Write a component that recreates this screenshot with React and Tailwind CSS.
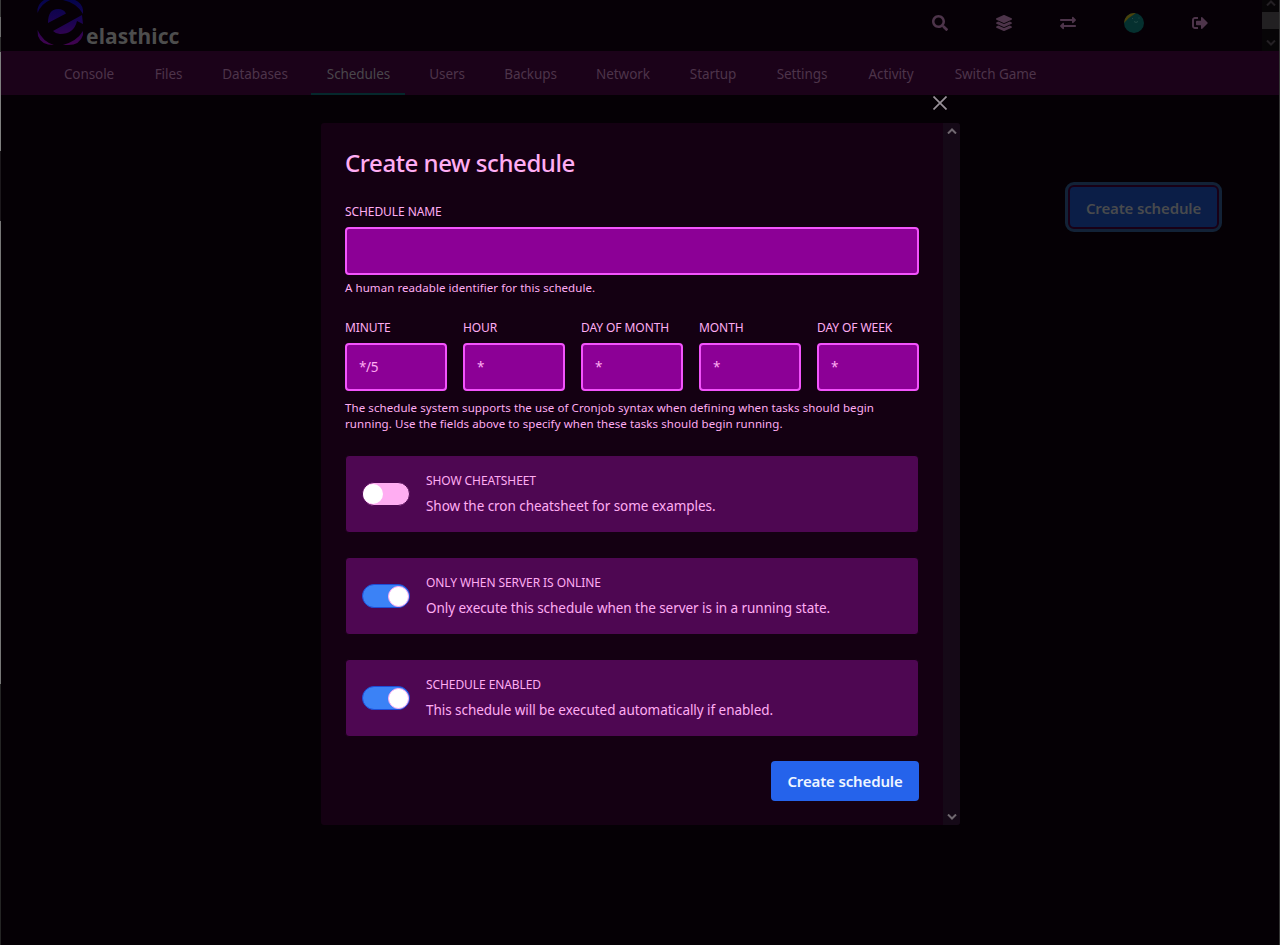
import { FaSearch, FaLayerGroup, FaExchangeAlt, FaSignOutAlt } from 'react-icons/fa';

const links = [
  ['Console', 'w-[83px]'],
  ['Files', 'w-[60px]'],
  ['Databases', 'w-[97px]'],
  ['Schedules', 'w-[94px]'],
  ['Users', 'w-[67px]'],
  ['Backups', 'w-[84px]'],
  ['Network', 'w-[85px]'],
  ['Startup', 'w-[79px]'],
  ['Settings', 'w-[83px]'],
  ['Activity', 'w-[79px]'],
  ['Switch Game', 'w-[114px]'],
];

const fields = [
  ['Minute', '*/5'],
  ['Hour', '*'],
  ['Day of month', '*'],
  ['Month', '*'],
  ['Day of week', '*'],
];

const toggles = [
  ['Show Cheatsheet', 'Show the cron cheatsheet for some examples.', false],
  ['Only When Server Is Online', 'Only execute this schedule when the server is in a running state.', true],
  ['Schedule Enabled', 'This schedule will be executed automatically if enabled.', true],
];

function Logo() {
  return (
    <svg className="block h-[46px] w-[48px]" viewBox="0 0 48 46">
      <defs>
        <linearGradient id="logo" x1="0" y1="0" x2="0" y2="46" gradientUnits="userSpaceOnUse">
          <stop offset="0" stopColor="#04044c" />
          <stop offset="0.5" stopColor="#1c0350" />
          <stop offset="1" stopColor="#440350" />
        </linearGradient>
      </defs>
      <path
        fill="url(#logo)"
        d="M1.500 13V9Q3 3 8 0H14Q5 4 1.500 13ZM27 0H39Q46 3 47 10V14Q41 3 27 0ZM12 23Q12 9 22 9Q28 9 30 13.500L12 23ZM17 31L46 15L47 24L41 21Q38 34 24 34Q20 34 17 31ZM1.500 30Q7 42 18 45Q5 45 2 36ZM47 31V35Q44 45 32 45H27Q41 41 47 31Z"
      />
    </svg>
  );
}

function Chevron({ down, className }) {
  return (
    <svg viewBox="0 0 10 6" className={className} fill="none" stroke="currentColor" strokeWidth="2">
      <path d={down ? 'M1 0.5L5 4.5L9 0.5' : 'M1 5.5L5 1.5L9 5.5'} />
    </svg>
  );
}

function Label({ children }) {
  return <div className="pt-px whitespace-nowrap text-[12px] leading-4 tracking-[-0.08px] text-[#ffadf2] uppercase">{children}</div>;
}

function Toggle({ on }) {
  return on ? (
    <span className="flex h-6 w-12 shrink-0 items-center justify-end rounded-full border border-[#1d4ed8] bg-[#3b82f6]">
      <span className="size-[21px] rounded-full border border-[#ffadf2] bg-white" />
    </span>
  ) : (
    <span className="flex h-6 w-12 shrink-0 items-center rounded-full border border-[#4d0752] bg-[#ffadf2]">
      <span className="size-5 rounded-full bg-white" />
    </span>
  );
}

export default function App() {
  return (
    <div className="flex h-[945px] w-[1280px] overflow-hidden bg-[#050005]">
      <div className="flex w-px shrink-0 flex-col">
        <span className="h-[17px] bg-[#3c3c3c]" />
        <span className="h-[20px] bg-[#6c6c6c]" />
        <span className="h-[15px] bg-[#303030]" />
        <span className="h-[99px] bg-[#7f7f7f]" />
        <span className="h-[70px] bg-[#1c181c]" />
        <span className="h-[463px] bg-[#777777]" />
        <span className="flex-1 bg-[#242424]" />
      </div>

      <div className="flex w-[1278px] shrink-0 flex-col font-['Noto_Sans',sans-serif]">
        <header className="flex h-[51px] shrink-0 justify-between bg-[#060006]">
          <div className="flex pl-[35px]">
            <Logo />
            <span className="ml-0.5 pt-[21px] text-[21px] leading-[30px] font-bold tracking-[0.1px] text-[#4d4d4d]">elasthicc</span>
          </div>
          <div className="flex">
            <div className="flex h-[46px] items-center text-[#4d344a]">
              <span className="flex w-16 justify-center"><FaSearch size={16} /></span>
              <span className="flex w-16 justify-center"><FaLayerGroup size={16} /></span>
              <span className="flex w-16 justify-center"><FaExchangeAlt size={16} /></span>
              <span className="flex w-[68px] justify-center">
                <svg className="size-5" viewBox="0 0 20 20">
                  <clipPath id="face"><circle cx="10" cy="10" r="10" /></clipPath>
                  <g clipPath="url(#face)">
                    <path fill="#05302f" d="M0 0H20V20H0Z" />
                    <path fill="#4b420b" d="M0 0H12Q5 4 0 10Z" />
                  </g>
                  <path d="M10 8.500Q12 10.500 14 8.500M8 5.500H9M14.500 5H15.500" fill="none" stroke="#28504c" strokeWidth="0.8" />
                </svg>
              </span>
              <span className="flex w-16 justify-center"><FaSignOutAlt size={16} /></span>
            </div>
            <div className="ml-[30px] flex w-[17px] flex-col items-center bg-[#070507] text-[#242024]">
              <Chevron className="h-[6px] w-[10px] shrink-0" />
              <span className="mt-[6px] h-[17px] w-full bg-[#222022]" />
              <Chevron down className="mt-[11px] h-[6px] w-[10px]" />
            </div>
          </div>
        </header>

        <nav className="flex h-11 shrink-0 gap-2 bg-[#1b0219] pl-[46px] text-[13.5px] tracking-[-0.08px] text-[#4d344a]">
          {links.map(([name, width]) => (
            <a
              key={name}
              className={`${width} flex h-11 items-center justify-center border-b-2 pt-1 pl-px whitespace-nowrap ${
                name === 'Schedules' ? 'border-[#05282c] text-[#4a474c]' : 'border-transparent'
              }`}
            >
              {name}
            </a>
          ))}
        </nav>

        <main className="flex flex-1 items-start">
          <section className="ml-[320px] w-[639px]">
            <div className="flex h-7 items-start justify-end pr-[13px]">
              <svg className="mt-px size-[14px] text-[#999099]" viewBox="0 0 14 14" fill="none" stroke="currentColor" strokeWidth="1.7">
                <path d="M0.5 0.5L13.5 13.5M13.5 0.5L0.5 13.5" />
              </svg>
            </div>
            <div className="flex h-[702px] overflow-hidden rounded-[3px] bg-[#140012]">
              <div className="w-[622px] px-6 pt-6 text-[#ffadf2]">
                <h2 className="text-[24px] leading-8 font-medium tracking-[-0.43px]">Create new schedule</h2>

                <div className="mt-6"><Label>Schedule name</Label></div>
                <div className="mt-[7px] h-12 rounded-[4px] border-2 border-[#f354fc] bg-[#8c0096]" />
                <p className="mt-[5px] text-[11.5px] leading-4 tracking-[0.07px]">A human readable identifier for this schedule.</p>

                <div className="mt-[23px] grid grid-cols-5 gap-4">
                  {fields.map(([name, value]) => (
                    <div key={name}>
                      <Label>{name}</Label>
                      <div className="mt-[7px] flex h-12 items-center rounded-[4px] border-2 border-[#f354fc] bg-[#8c0096] px-3 pt-px text-[13.5px] tracking-[-0.4px]">{value}</div>
                    </div>
                  ))}
                </div>
                <p className="mt-[9px] text-[11.5px] leading-4 tracking-[0.08px] whitespace-nowrap">
                  The schedule system supports the use of Cronjob syntax when defining when tasks should begin
                  <br />
                  running. Use the fields above to specify when these tasks should begin running.
                </p>

                <div className="mt-[23px] flex flex-col gap-6">
                  {toggles.map(([name, text, on]) => (
                    <div key={name} className="flex h-[78px] items-center rounded-[4px] border border-[#140012] bg-[#4e0752] pl-4">
                      <Toggle on={on} />
                      <div className="ml-4 pb-px">
                        <Label>{name}</Label>
                        <p className="mt-[7px] text-[13.5px] leading-5 tracking-[-0.05px] whitespace-nowrap">{text}</p>
                      </div>
                    </div>
                  ))}
                </div>

                <div className="mt-6 flex justify-end">
                  <button className="h-10 w-[148px] rounded-[4px] bg-[#2563eb] text-[15px] font-semibold tracking-[-0.15px] whitespace-nowrap text-[#eff6ff]">Create schedule</button>
                </div>
              </div>
              <div className="flex w-[17px] flex-col items-center justify-between bg-[#150917] py-[5px] text-[#706870]">
                <Chevron className="h-[6px] w-[10px]" />
                <Chevron down className="h-[6px] w-[10px]" />
              </div>
            </div>
          </section>
          <button className="mt-[87px] ml-[105px] h-[50px] w-[157px] rounded-[9px] border-[3px] border-[#122237] bg-[#190016] p-0.5">
            <span className="flex h-full w-full items-center justify-center rounded-[4px] bg-[#0b1e47] pt-0.5 text-[15px] font-semibold tracking-[-0.15px] whitespace-nowrap text-[#484a4d]">Create schedule</span>
          </button>
        </main>
      </div>
      <div className="w-px shrink-0 bg-[#343434]" />
    </div>
  );
}
